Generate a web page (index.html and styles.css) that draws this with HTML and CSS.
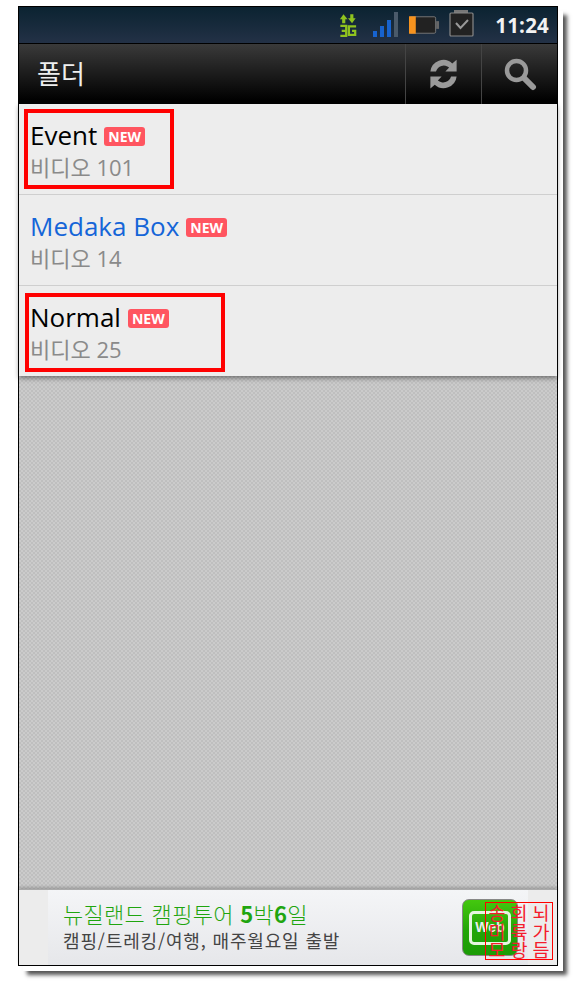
FILE: index.html
```html
<!DOCTYPE html>
<html lang="ko">
<head>
  <meta charset="UTF-8">
  <title>폴더</title>
  <meta name="viewport" content="width=device-width, initial-scale=1.0">
  <link rel="stylesheet" href="styles.css">
</head>
<body>
  <div class="phone">
    <div class="status-bar">
      <svg class="ic-3g" width="18" height="26" viewBox="0 0 20 26">
        <path d="M5 1 L9.500 6.500 H7 V11 H3.500 V6.500 H1 Z M14.500 11 L10 5.500 H12.500 V1 H16 V5.500 H18.500 Z" fill="#8fc31f"/>
        <path d="M1.500 14 H8 V25 H1.500 M3 19.500 H8 M19 14.500 H11 V24 H18 V19.500 H14.500" fill="none" stroke="#8fc31f" stroke-width="2.500"/>
      </svg>
      <svg class="ic-signal" width="27" height="27" viewBox="0 0 27 27">
        <rect x="0" y="20" width="4" height="6" fill="#1763cf"/>
        <rect x="7" y="15" width="4" height="11" fill="#1763cf"/>
        <rect x="14" y="9" width="4" height="17" fill="#1763cf"/>
        <rect x="21" y="1" width="4" height="25" fill="#4a5a6a"/>
      </svg>
      <svg class="ic-battery" width="31" height="20" viewBox="0 0 32 20">
        <rect x="0.500" y="1.500" width="27" height="17" rx="1.500" fill="#222" stroke="#777"/>
        <rect x="0" y="1" width="7" height="18" fill="#f7931e"/>
        <rect x="28" y="6" width="3" height="8" fill="#666"/>
      </svg>
      <svg class="ic-task" width="26" height="28" viewBox="0 0 26 28">
        <rect x="5" y="0" width="14" height="3" fill="#777"/>
        <rect x="1" y="3" width="23" height="23" rx="1" fill="#222" stroke="#888" stroke-width="1.200"/>
        <path d="M7 13 L11.500 18 L19 10" fill="none" stroke="#999" stroke-width="2"/>
      </svg>
      <span class="clock">11:24</span>
    </div>

    <div class="action-bar">
      <h1 class="bar-title">폴더</h1>
      <button class="bar-btn">
        <svg width="29" height="30" viewBox="4 3 22 24">
          <path d="M4.500 13 A10.500 10.500 0 0 1 22 6.500 L25.500 3.500 V13 H16.500 L19.500 9.800 A6.500 6.500 0 0 0 9 13 Z" fill="#9a9a9a"/>
          <path d="M25.500 17 A10.500 10.500 0 0 1 8 23.500 L4.500 26.500 V17 H13.500 L10.500 20.200 A6.500 6.500 0 0 0 21 17 Z" fill="#9a9a9a"/>
        </svg>
      </button>
      <button class="bar-btn">
        <svg width="34" height="34" viewBox="0 0 34 34">
          <circle cx="13.500" cy="13.500" r="9.500" fill="none" stroke="#9a9a9a" stroke-width="4.500"/>
          <path d="M21 21 L30 30" stroke="#9a9a9a" stroke-width="6" stroke-linecap="round"/>
        </svg>
      </button>
    </div>

    <ul class="folders">
      <li class="folder">
        <div class="folder-name">Event <span class="tag">NEW</span></div>
        <div class="folder-count">비디오 101</div>
      </li>
      <li class="folder">
        <div class="folder-name is-current">Medaka Box <span class="tag">NEW</span></div>
        <div class="folder-count">비디오 14</div>
      </li>
      <li class="folder">
        <div class="folder-name">Normal <span class="tag">NEW</span></div>
        <div class="folder-count">비디오 25</div>
      </li>
    </ul>

    <div class="empty"></div>

    <div class="ad">
      <div class="ad-inner">
        <div class="ad-text">
          <div class="ad-title">뉴질랜드 캠핑투어 <b>5</b>박<b>6</b>일</div>
          <div class="ad-sub">캠핑/트레킹/여행, 매주월요일 출발</div>
        </div>
        <div class="ad-icon"><span class="ad-web">Web</span></div>
      </div>
    </div>

    <div class="mark mark-event"></div>
    <div class="mark mark-normal"></div>
    <div class="seal">
      <span>송</span><span>회</span><span>뇌</span>
      <span>미</span><span>륙</span><span>가</span>
      <span>모</span><span>랑</span><span>듬</span>
    </div>
  </div>
</body>
</html>
```
FILE: styles.css
```css
* {
  box-sizing: border-box;
}
html, body {
  margin: 0;
  height: 100%;
  background: #fff;
  overflow: hidden;
}
body {
  padding: 6px 0 0 18px;
  font-family: "Open Sans", "Noto Sans CJK KR", sans-serif;
}
.phone {
  position: relative;
  display: flex;
  flex-direction: column;
  width: 540px;
  height: 960px;
  border: 1px solid #000;
  background: #ededed;
  box-shadow: 5px 5px 0 0 #fff, 9px 9px 4px 0 #555;
}

/* status bar */
.status-bar {
  display: flex;
  align-items: center;
  height: 37px;
  padding-right: 8px;
  background: linear-gradient(to bottom, #0b2331, #233146);
  border-bottom: 1px solid #000;
}
.ic-3g {
  margin-left: 320px;
}
.ic-signal {
  margin-left: 16px;
  margin-top: -2px;
}
.ic-battery {
  margin-left: 9px;
}
.ic-task {
  margin-left: 9px;
  margin-top: -2px;
}
.clock {
  margin-left: auto;
  color: #f2f2f2;
  font-size: 20.500px;
  font-weight: 700;
  letter-spacing: 0.2px;
}

/* action bar */
.action-bar {
  display: flex;
  align-items: stretch;
  height: 60px;
  background: linear-gradient(to bottom, #3a3a3a, #000 95%);
}
.bar-title {
  flex: 1;
  margin: 0;
  padding-left: 18px;
  color: #eee;
  font-family: "Noto Sans CJK KR", sans-serif;
  font-size: 26px;
  font-weight: 400;
  line-height: 58px;
}
.bar-btn {
  display: flex;
  align-items: center;
  justify-content: center;
  width: 76px;
  padding: 0;
  background: transparent;
  border: none;
  border-left: 1px solid #444;
}

/* list */
.folders {
  margin: 0;
  padding: 0;
  list-style: none;
  box-shadow: 0 2px 5px rgba(0, 0, 0, 0.45);
  position: relative;
}
.folder {
  height: 91px;
  padding: 13px 0 0 11px;
  border-bottom: 1px solid #cfcfcf;
  background: #ededed;
}
.folder:last-child {
  height: 90px;
  border-bottom: none;
}
.folder-name {
  display: flex;
  align-items: center;
  gap: 7px;
  height: 36px;
  color: #000;
  font-size: 26px;
}
.folder-name.is-current {
  color: #1565d8;
}
.tag {
  margin-top: 3px;
  padding: 0 4px;
  height: 19px;
  border-radius: 3px;
  background: #ff5560;
  color: #fff;
  font-size: 14px;
  font-weight: 700;
  line-height: 19px;
}
.folder-count {
  color: #8a8a8a;
  font-size: 22px;
  line-height: 29px;
}

/* empty area */
.empty {
  flex: 1;
  background-color: #c8c8c8;
  background-image: repeating-conic-gradient(#bfbfbf 0 25%, #cbcbcb 0 50%);
  background-size: 4px 4px;
}

/* ad */
.ad {
  height: 76px;
  padding: 0 0 0 29px;
  background: #ececec;
  border-top: 1px solid #aaa;
  box-shadow: 0 -2px 3px rgba(0, 0, 0, 0.2);
  position: relative;
}
.ad-inner {
  display: flex;
  align-items: center;
  height: 100%;
  width: 480px;
  padding-left: 15px;
  background: linear-gradient(to bottom, #f4f5f7, #e6e7ea);
}
.ad-text {
  flex: 1;
  font-family: "Noto Sans CJK KR", sans-serif;
}
.ad-title {
  color: #1fa50f;
  font-size: 22px;
  font-weight: 300;
  letter-spacing: 0.300px;
  line-height: 28px;
  margin-top: -3px;
}
.ad-title b {
  font-weight: 700;
}
.ad-sub {
  color: #444;
  font-size: 18px;
  letter-spacing: 0.850px;
  line-height: 26px;
}
.ad-icon {
  display: flex;
  align-items: center;
  justify-content: center;
  flex-shrink: 0;
  width: 56px;
  height: 57px;
  margin-right: 10px;
  border: 1px solid #888;
  border-radius: 7px;
  background: linear-gradient(to bottom, #44c80f, #22a508 55%, #1c9c06);
}
.ad-web {
  width: 42px;
  height: 34px;
  border: 3px solid #e6f5df;
  border-radius: 5px;
  color: #eee;
  font-family: "Liberation Sans", sans-serif;
  font-size: 14px;
  font-weight: 700;
  line-height: 26px;
  text-align: center;
}

/* red marks laid over the shot */
.mark {
  position: absolute;
  border: 4px solid #f00;
}
.mark-event {
  left: 5px;
  top: 102px;
  width: 150px;
  height: 80px;
}
.mark-normal {
  left: 6px;
  top: 286px;
  width: 200px;
  height: 79px;
}
.seal {
  position: absolute;
  left: 466px;
  top: 895px;
  display: grid;
  grid-template-columns: repeat(3, 22px);
  grid-template-rows: repeat(3, 18.500px);
  align-content: center;
  width: 68px;
  height: 58px;
  border: 1px solid #f00;
  color: #f41c2c;
  font-family: "Noto Sans CJK KR", sans-serif;
  font-size: 18.500px;
  line-height: 18.500px;
  text-align: center;
}
```
